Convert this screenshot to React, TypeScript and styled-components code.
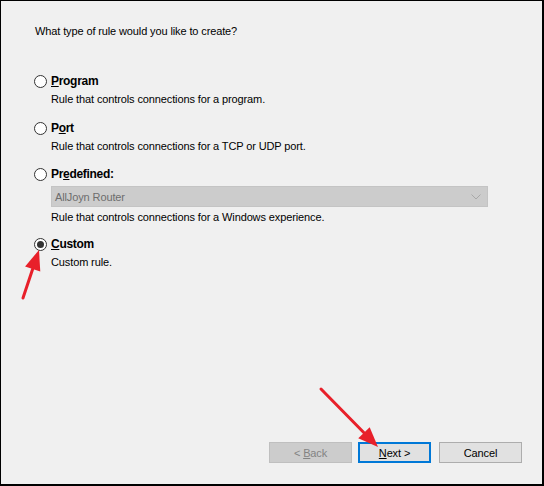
import React from "react";
import styled, { createGlobalStyle } from "styled-components";

const Global = createGlobalStyle`
  html, body { margin: 0; padding: 0; background: #f0f0f0; }
  body { font-family: "Liberation Sans", Arial, sans-serif; font-size: 11px; letter-spacing: -0.12px; color: #000; }
  * { box-sizing: border-box; }
`;

const Frame = styled.div`
  position: relative;
  width: 544px;
  height: 486px;
  background: #f0f0f0;
  border-style: solid;
  border-color: #000;
  border-width: 1px 2px 2px 1px;
  display: flex;
  flex-direction: column;
  padding: 22px 0 0 33px;
`;

const Heading = styled.div`
  line-height: 16px;
  margin-left: 1px;
`;

const OptionList = styled.div`
  margin-top: 34px;
  display: flex;
  flex-direction: column;
`;

const Option = styled.div<{ $gap: number }>`
  display: grid;
  grid-template-columns: 17px 1fr;
  margin-top: ${(p) => p.$gap}px;
`;

const RadioCell = styled.div`
  height: 16px;
  display: flex;
  align-items: center;
`;

const Radio = styled.span<{ $checked?: boolean }>`
  width: 13px;
  height: 13px;
  border-radius: 50%;
  border: 1px solid #333;
  background: #fff;
  display: flex;
  align-items: center;
  justify-content: center;
  &::after {
    content: "";
    display: ${(p) => (p.$checked ? "block" : "none")};
    width: 7px;
    height: 7px;
    border-radius: 50%;
    background: #333;
  }
`;

const Body = styled.div`
  display: flex;
  flex-direction: column;
`;

const Label = styled.div`
  font-weight: bold;
  font-size: 12px;
  letter-spacing: -0.3px;
  line-height: 16px;
  u { text-decoration: underline; }
`;

const Desc = styled.div`
  line-height: 16px;
  margin-top: 2px;
`;

const Select = styled.div`
  margin-top: 4px;
  width: 437px;
  height: 21px;
  background: #cccccc;
  border: 1px solid #c4c4c4;
  color: #6d6d6d;
  display: flex;
  align-items: center;
  justify-content: space-between;
  padding: 0 6px 0 3px;
`;

const Footer = styled.div`
  margin-top: auto;
  display: flex;
  justify-content: flex-end;
  gap: 6px;
  padding: 0 20px 21px 0;
`;

const Button = styled.div<{ $variant: "disabled" | "primary" | "normal" }>`
  width: ${(p) => (p.$variant === "primary" ? 73 : 83)}px;
  height: 21px;
  display: flex;
  align-items: center;
  justify-content: center;
  background: ${(p) => (p.$variant === "disabled" ? "#cccccc" : "#e1e1e1")};
  border: ${(p) =>
    p.$variant === "primary"
      ? "2px solid #0078d7"
      : p.$variant === "disabled"
      ? "1px solid #bfbfbf"
      : "1px solid #adadad"};
  color: ${(p) => (p.$variant === "disabled" ? "#838383" : "#000")};
  margin-left: ${(p) => (p.$variant === "normal" ? 2 : 0)}px;
  u { text-decoration: underline; }
`;

const Overlay = styled.svg`
  position: absolute;
  left: 0;
  top: 0;
  pointer-events: none;
`;

function Arrow({ x1, y1, x2, y2 }: { x1: number; y1: number; x2: number; y2: number }) {
  const dx = x2 - x1;
  const dy = y2 - y1;
  const len = Math.hypot(dx, dy);
  const ux = dx / len;
  const uy = dy / len;
  const headLen = 20;
  const headW = 8;
  const bx = x2 - ux * headLen;
  const by = y2 - uy * headLen;
  const px = -uy;
  const py = ux;
  const pts = `${x2},${y2} ${bx + px * headW},${by + py * headW} ${bx - px * headW},${by - py * headW}`;
  return (
    <g>
      <line x1={x1} y1={y1} x2={bx} y2={by} stroke="#e8202a" strokeWidth={3} strokeLinecap="round" />
      <polygon points={pts} fill="#e8202a" />
    </g>
  );
}

export default function App() {
  return (
    <>
      <Global />
      <Frame>
        <Heading>What type of rule would you like to create?</Heading>
        <OptionList>
          <Option $gap={0}>
            <RadioCell><Radio /></RadioCell>
            <Body>
              <Label><u>P</u>rogram</Label>
              <Desc>Rule that controls connections for a program.</Desc>
            </Body>
          </Option>
          <Option $gap={13}>
            <RadioCell><Radio /></RadioCell>
            <Body>
              <Label>P<u>o</u>rt</Label>
              <Desc>Rule that controls connections for a TCP or UDP port.</Desc>
            </Body>
          </Option>
          <Option $gap={12}>
            <RadioCell><Radio /></RadioCell>
            <Body>
              <Label>Pr<u>e</u>defined:</Label>
              <Select>
                <span>AllJoyn Router</span>
                <svg width="10" height="6" viewBox="0 0 10 6">
                  <polyline points="0.5,0.5 5,5 9.5,0.5" fill="none" stroke="#a8a8a8" strokeWidth="1" />
                </svg>
              </Select>
              <Desc>Rule that controls connections for a Windows experience.</Desc>
            </Body>
          </Option>
          <Option $gap={11}>
            <RadioCell><Radio $checked /></RadioCell>
            <Body>
              <Label><u>C</u>ustom</Label>
              <Desc>Custom rule.</Desc>
            </Body>
          </Option>
        </OptionList>
        <Footer>
          <Button $variant="disabled"><span>&lt; <u>B</u>ack</span></Button>
          <Button $variant="primary"><span><u>N</u>ext &gt;</span></Button>
          <Button $variant="normal">Cancel</Button>
        </Footer>
        <Overlay width="544" height="486" viewBox="0 0 544 486">
          <Arrow x1={22} y1={297} x2={38} y2={249} />
          <Arrow x1={320} y1={388} x2={377} y2={446} />
        </Overlay>
      </Frame>
    </>
  );
}
